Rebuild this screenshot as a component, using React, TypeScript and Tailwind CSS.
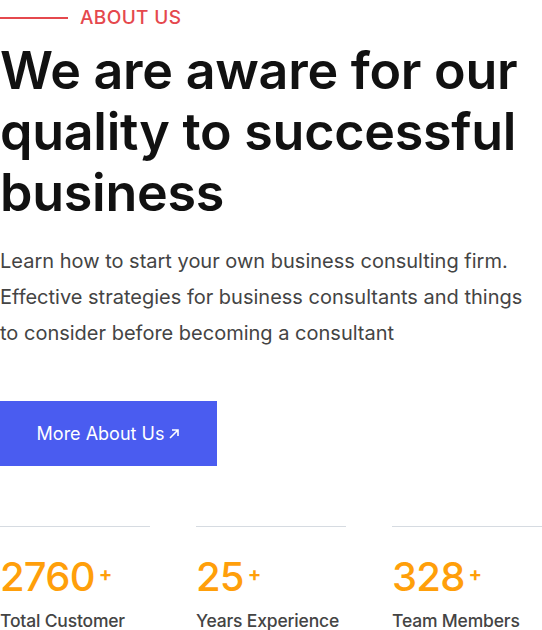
export default function App() {
  const stats = [
    { value: '2760', label: 'Total Customer' },
    { value: '25', label: 'Years Experience' },
    { value: '328', label: 'Team Members' },
  ]

  return (
    <div className="w-[542px] h-[630px] overflow-hidden bg-white font-['Inter',sans-serif]">
      {/* Eyebrow */}
      <div className="flex items-center gap-3 h-9">
        <span className="block w-[68px] h-[2px] bg-[#e5484d]" />
        <span className="text-[19px] font-medium uppercase tracking-[0.02em] text-[#e5484d]">About us</span>
      </div>

      {/* Heading */}
      <h1 className="mt-1 text-[52px] leading-[61px] font-semibold tracking-[-0.005em] text-[#111]">
        We are aware for our quality to successful business
      </h1>

      {/* Body */}
      <p className="mt-5 max-w-[530px] text-[20px] leading-[36px] text-[#444]">
        Learn how to start your own business consulting firm. Effective strategies for business consultants and things
        to consider before becoming a consultant
      </p>

      <button className="mt-[50px] flex items-center justify-center gap-1 w-[217px] h-[65px] bg-[#4a5cf0] text-white text-[18px]">
        More About Us
        <svg width="12" height="12" viewBox="0 0 12 12" fill="none" stroke="currentColor" strokeWidth="1.6">
          <path d="M2 10 L10 2 M4 2 H10 V8" />
        </svg>
      </button>

      {/* Stats */}
      <div className="mt-[60px] grid grid-cols-3 gap-[46px]">
        {stats.map((s) => (
          <div key={s.label} className="border-t border-[#d6dbe1] pt-[26px]">
            <div className="flex items-start text-[#ff9f0a]">
              <span className="text-[40px] leading-[48px] font-medium tracking-[-0.02em]">{s.value}</span>
              <span className="ml-1 mt-[11px] text-[20px] leading-none font-bold">+</span>
            </div>
            <div className="mt-[8px] whitespace-nowrap text-[17.5px] leading-6 font-medium tracking-[-0.01em] text-[#444]">
              {s.label}
            </div>
          </div>
        ))}
      </div>
    </div>
  )
}
